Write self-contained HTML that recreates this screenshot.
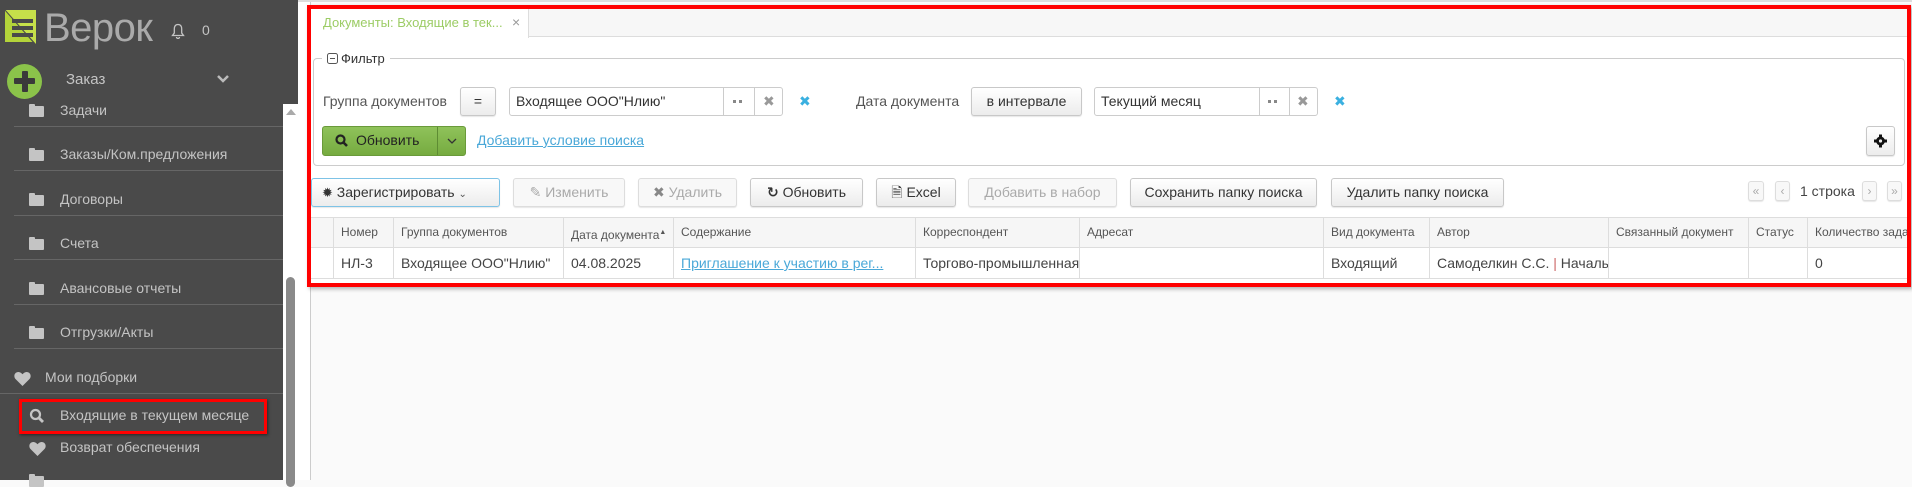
<!DOCTYPE html>
<html><head><meta charset="utf-8"><style>
*{box-sizing:border-box;margin:0;padding:0}
body{width:1912px;height:480px;overflow:hidden;background:#fafafa;font-family:"Liberation Sans","DejaVu Sans",sans-serif;position:relative;font-size:13px;color:#333}
.a{position:absolute}
.sb{left:0;top:0;width:298px;height:480px;background:#4a4a4a}
.si{position:absolute;color:#c4c4c4;font-size:14px;white-space:nowrap}
.sep{position:absolute;left:14px;width:269px;height:1px;background:#666}
.fold{position:absolute;width:15px;height:11px;background:#c4c4c4;border-radius:1px}
.fold:before{content:"";position:absolute;left:0;top:-2px;width:6px;height:3px;background:#c4c4c4;border-radius:1px 1px 0 0}
.btn{position:absolute;height:29px;border:1px solid #c8c8c8;border-radius:3px;background:linear-gradient(#fff,#ececec);font-size:14px;color:#333;line-height:27px;text-align:center;white-space:nowrap;box-shadow:0 1px 1px rgba(0,0,0,.1)}
.dis{color:#aaa;background:#f8f8f8;border-color:#ddd}
.inp{position:absolute;height:29px;border:1px solid #ccc;border-radius:3px;background:#fff;font-size:14px;line-height:27px;padding-left:6px}
.th{position:absolute;top:217px;height:31px;border-right:1px solid #ddd;font-size:12px;color:#555;line-height:31px;padding-left:7px;white-space:nowrap;overflow:hidden}
.td{position:absolute;top:248px;height:31px;border-right:1px solid #ddd;font-size:14px;color:#444;line-height:31px;padding-left:7px;white-space:nowrap;overflow:hidden}
.bx{color:#3ab0e0;font-weight:bold;font-size:14px}
</style></head><body>
<div class="a sb"></div>
<!-- logo -->
<svg class="a" style="left:3px;top:10px" width="34" height="35" viewBox="0 0 34 35"><polygon points="2,0 33,0 33,34" fill="#c6e04a"/><polygon points="2,0 2,32 30,32" fill="#b3d33a"/><rect x="9" y="9" width="21" height="4" fill="#4a4a4a"/><rect x="9" y="16" width="21" height="4" fill="#4a4a4a"/><rect x="9" y="23" width="21" height="4" fill="#4a4a4a"/><line x1="2" y1="0" x2="32" y2="34" stroke="#4a4a4a" stroke-width="1"/></svg>
<div class="a" style="left:44px;top:6px;font-size:40px;color:#aaa;letter-spacing:-0.5px">Верок</div>
<svg class="a" style="left:171px;top:23px" width="14" height="16" viewBox="0 0 14 16"><path d="M7 1.5C4.3 1.5 3.3 3.5 3.3 6v4L1.5 12.5h11L10.7 10V6c0-2.5-1-4.5-3.7-4.5zM5.5 14a1.5 1.5 0 0 0 3 0" fill="none" stroke="#c4c4c4" stroke-width="1.3"/></svg>
<div class="si" style="left:202px;top:22px;font-size:14px">0</div>
<div class="a" style="left:7px;top:64px;width:35px;height:35px;border-radius:50%;background:#8bc34a"></div>
<div class="a" style="left:14px;top:78px;width:21px;height:6px;background:#3a3a3a;border-radius:1px"></div>
<div class="a" style="left:21.5px;top:71px;width:6px;height:21px;background:#3a3a3a;border-radius:1px"></div>
<div class="si" style="left:66px;top:71px;font-size:15px">Заказ</div>
<svg class="a" style="left:216px;top:74px" width="14" height="10"><path d="M2 2l5 5 5-5" fill="none" stroke="#bbb" stroke-width="2.5"/></svg>
<!-- scrollbar -->
<div class="a" style="left:283px;top:104px;width:15px;height:376px;background:#fff"></div>
<svg class="a" style="left:286px;top:109px" width="10" height="6"><polygon points="0,6 5,0 10,6" fill="#aaa"/></svg>
<div class="a" style="left:286px;top:277px;width:9px;height:210px;background:#8a8a8a;border-radius:5px"></div>
<!-- menu -->
<div class="fold" style="left:29px;top:106px"></div><div class="si" style="left:60px;top:102px">Задачи</div><div class="sep" style="top:126px"></div>
<div class="fold" style="left:29px;top:150px"></div><div class="si" style="left:60px;top:146px">Заказы/Ком.предложения</div><div class="sep" style="top:170px"></div>
<div class="fold" style="left:29px;top:195px"></div><div class="si" style="left:60px;top:191px">Договоры</div><div class="sep" style="top:215px"></div>
<div class="fold" style="left:29px;top:239px"></div><div class="si" style="left:60px;top:235px">Счета</div><div class="sep" style="top:259px"></div>
<div class="fold" style="left:29px;top:284px"></div><div class="si" style="left:60px;top:280px">Авансовые отчеты</div><div class="sep" style="top:304px"></div>
<div class="fold" style="left:29px;top:328px"></div><div class="si" style="left:60px;top:324px">Отгрузки/Акты</div><div class="sep" style="top:348px"></div>
<svg class="a" style="left:14px;top:371px" width="17" height="15" viewBox="0 0 17 15"><path d="M8.5 15L1.5 8C-0.5 6 0 1.5 4 1c2-.2 3.5 1 4.5 2.3C9.5 2 11 .8 13 1c4 .5 4.5 5 2.5 7z" fill="#c4c4c4"/></svg>
<div class="si" style="left:45px;top:369px">Мои подборки</div><div class="sep" style="top:393px;left:0;width:283px"></div>
<svg class="a" style="left:29px;top:408px" width="16" height="16"><circle cx="6.5" cy="6.5" r="4.5" fill="none" stroke="#c4c4c4" stroke-width="2.2"/><line x1="10" y1="10" x2="14" y2="14" stroke="#c4c4c4" stroke-width="2.8"/></svg>
<div class="si" style="left:60px;top:407px">Входящие в текущем месяце</div>
<div class="a" style="left:19px;top:399px;width:248px;height:35px;border:3px solid #f00;box-shadow:1px 1px 3px rgba(0,0,0,.5)"></div>
<svg class="a" style="left:29px;top:441px" width="17" height="15" viewBox="0 0 17 15"><path d="M8.5 15L1.5 8C-0.5 6 0 1.5 4 1c2-.2 3.5 1 4.5 2.3C9.5 2 11 .8 13 1c4 .5 4.5 5 2.5 7z" fill="#c4c4c4"/></svg>
<div class="si" style="left:60px;top:439px">Возврат обеспечения</div>
<div class="fold" style="left:29px;top:476px"></div>
<!-- main -->
<div class="a" style="left:298px;top:0;width:1614px;height:2px;background:#ddd"></div>
<div class="a" style="left:298px;top:2px;width:13px;height:478px;background:#fff;border-right:1px solid #ccc"></div>
<div class="a" style="left:311px;top:9px;width:1597px;height:276px;background:#fff"></div>
<div class="a" style="left:311px;top:9px;width:1597px;height:28px;background:#f7f7f7;border-bottom:1px solid #ddd"></div>
<div class="a" style="left:311px;top:9px;width:218px;height:29px;background:#fff;border-right:1px solid #ddd"></div>
<div class="a" style="left:323px;top:15px;color:#9ccc65;font-size:13px">Документы: Входящие в тек...</div>
<div class="a" style="left:512px;top:14px;color:#999;font-size:14px">×</div>
<!-- filter -->
<div class="a" style="left:313px;top:58px;width:1592px;height:108px;border:1px solid #ccc;border-radius:4px"></div>
<div class="a" style="left:322px;top:50px;background:#fff;padding:0 5px;font-size:13px;color:#333;line-height:18px"><svg width="11" height="11" style="vertical-align:-1px;margin-right:3px"><rect x="0.5" y="0.5" width="10" height="10" rx="2" fill="none" stroke="#555"/><line x1="3" y1="5.5" x2="8" y2="5.5" stroke="#555"/></svg>Фильтр</div>
<div class="a" style="left:323px;top:93px;font-size:14px;color:#555">Группа документов</div>
<div class="btn" style="left:460px;top:87px;width:36px">=</div>
<div class="inp" style="left:509px;top:87px;width:274px">Входящее ООО"Нлию"</div>
<div class="a" style="left:723px;top:88px;width:1px;height:27px;background:#ccc"></div>
<div class="a" style="left:754px;top:88px;width:1px;height:27px;background:#ccc"></div>
<div class="a" style="left:733px;top:100px;width:9px;height:3px;border-top:3px dotted #888"></div>
<div class="a" style="left:763px;top:93px;color:#999;font-size:14px;font-weight:bold">✖</div>
<div class="a bx" style="left:799px;top:93px">✖</div>
<div class="a" style="left:856px;top:93px;font-size:14px;color:#555">Дата документа</div>
<div class="btn" style="left:971px;top:87px;width:111px">в интервале</div>
<div class="inp" style="left:1094px;top:87px;width:224px">Текущий месяц</div>
<div class="a" style="left:1259px;top:88px;width:1px;height:27px;background:#ccc"></div>
<div class="a" style="left:1289px;top:88px;width:1px;height:27px;background:#ccc"></div>
<div class="a" style="left:1268px;top:100px;width:9px;height:3px;border-top:3px dotted #888"></div>
<div class="a" style="left:1297px;top:93px;color:#999;font-size:14px;font-weight:bold">✖</div>
<div class="a bx" style="left:1334px;top:93px">✖</div>
<div class="a" style="left:322px;top:126px;width:144px;height:30px;border:1px solid #6a9a3a;border-radius:3px;background:linear-gradient(#8fc25a,#76ab40)"></div>
<div class="a" style="left:437px;top:127px;width:1px;height:28px;background:#5e8c33"></div>
<svg class="a" style="left:335px;top:134px" width="13" height="14"><circle cx="5.5" cy="5.5" r="4" fill="none" stroke="#222" stroke-width="2.2"/><line x1="8.5" y1="8.5" x2="12" y2="12" stroke="#222" stroke-width="2.6"/></svg>
<div class="a" style="left:356px;top:132px;font-size:14px;color:#222">Обновить</div>
<svg class="a" style="left:447px;top:138px" width="10" height="7"><path d="M1 1l4 4 4-4" fill="none" stroke="#333" stroke-width="1.3"/></svg>
<div class="a" style="left:477px;top:132px;font-size:14px;color:#4aa8d8;text-decoration:underline">Добавить условие поиска</div>
<div class="btn" style="left:1866px;top:126px;width:29px;height:30px"></div>
<svg class="a" style="left:1874px;top:134px" width="13" height="14" viewBox="0 0 13 14"><g fill="#111"><circle cx="6.5" cy="7" r="4.5"/><rect x="5" y="0.5" width="3" height="13"/><rect x="0" y="5.5" width="13" height="3"/></g><circle cx="6.5" cy="7" r="1.6" fill="#eee"/></svg>
<!-- toolbar -->
<div class="btn" style="left:311px;top:178px;width:189px;border-color:#7ec3e6;text-align:left;padding-left:10px"><span style="font-size:13px">✹</span> Зарегистрировать <span style="font-size:10px;color:#555">&#8964;</span></div>
<div class="btn dis" style="left:513px;top:178px;width:112px">✎ Изменить</div>
<div class="btn dis" style="left:638px;top:178px;width:99px"><b style="color:#888">✖</b> Удалить</div>
<div class="btn" style="left:750px;top:178px;width:113px"><b>↻</b> Обновить</div>
<div class="btn" style="left:876px;top:178px;width:80px">🗎 Excel</div>
<div class="btn dis" style="left:968px;top:178px;width:149px">Добавить в набор</div>
<div class="btn" style="left:1130px;top:178px;width:187px">Сохранить папку поиска</div>
<div class="btn" style="left:1331px;top:178px;width:173px">Удалить папку поиска</div>
<div class="btn dis" style="left:1748px;top:181px;width:16px;height:20px;line-height:18px;font-size:12px">«</div>
<div class="btn dis" style="left:1775px;top:181px;width:15px;height:20px;line-height:18px;font-size:12px">‹</div>
<div class="a" style="left:1800px;top:183px;font-size:14px;color:#444">1 строка</div>
<div class="btn dis" style="left:1862px;top:181px;width:15px;height:20px;line-height:18px;font-size:12px">›</div>
<div class="btn dis" style="left:1887px;top:181px;width:15px;height:20px;line-height:18px;font-size:12px">»</div>
<!-- table -->
<div class="a" style="left:311px;top:217px;width:1597px;height:31px;background:#f6f6f6;border-top:1px solid #ddd;border-bottom:1px solid #ddd"></div>
<div class="a" style="left:311px;top:248px;width:1597px;height:31px;background:#fff;border-bottom:1px solid #ddd"></div>
<div class="th" style="left:311px;width:23px"></div>
<div class="th" style="left:334px;width:60px">Номер</div>
<div class="th" style="left:394px;width:170px">Группа документов</div>
<div class="th" style="left:564px;width:110px">Дата документа<sup style="font-size:7px">▲</sup></div>
<div class="th" style="left:674px;width:242px">Содержание</div>
<div class="th" style="left:916px;width:164px">Корреспондент</div>
<div class="th" style="left:1080px;width:244px">Адресат</div>
<div class="th" style="left:1324px;width:106px">Вид документа</div>
<div class="th" style="left:1430px;width:179px">Автор</div>
<div class="th" style="left:1609px;width:140px">Связанный документ</div>
<div class="th" style="left:1749px;width:59px">Статус</div>
<div class="th" style="left:1808px;width:100px;border:none">Количество задач</div>
<div class="td" style="left:311px;width:23px"></div>
<div class="td" style="left:334px;width:60px">НЛ-3</div>
<div class="td" style="left:394px;width:170px">Входящее ООО"Нлию"</div>
<div class="td" style="left:564px;width:110px">04.08.2025</div>
<div class="td" style="left:674px;width:242px"><span style="color:#4aa8d8;text-decoration:underline">Приглашение к участию в рег...</span></div>
<div class="td" style="left:916px;width:164px">Торгово-промышленная</div>
<div class="td" style="left:1080px;width:244px"></div>
<div class="td" style="left:1324px;width:106px">Входящий</div>
<div class="td" style="left:1430px;width:179px">Самоделкин С.С. <span style="color:#c66">|</span> Начальник</div>
<div class="td" style="left:1609px;width:140px"></div>
<div class="td" style="left:1749px;width:59px"></div>
<div class="td" style="left:1808px;width:100px;border:none">0</div>
<!-- red frame -->
<div class="a" style="left:307px;top:5px;width:1604px;height:282px;border:4px solid #f00;box-shadow:2px 2px 4px rgba(0,0,0,.3)"></div>
</body></html>
